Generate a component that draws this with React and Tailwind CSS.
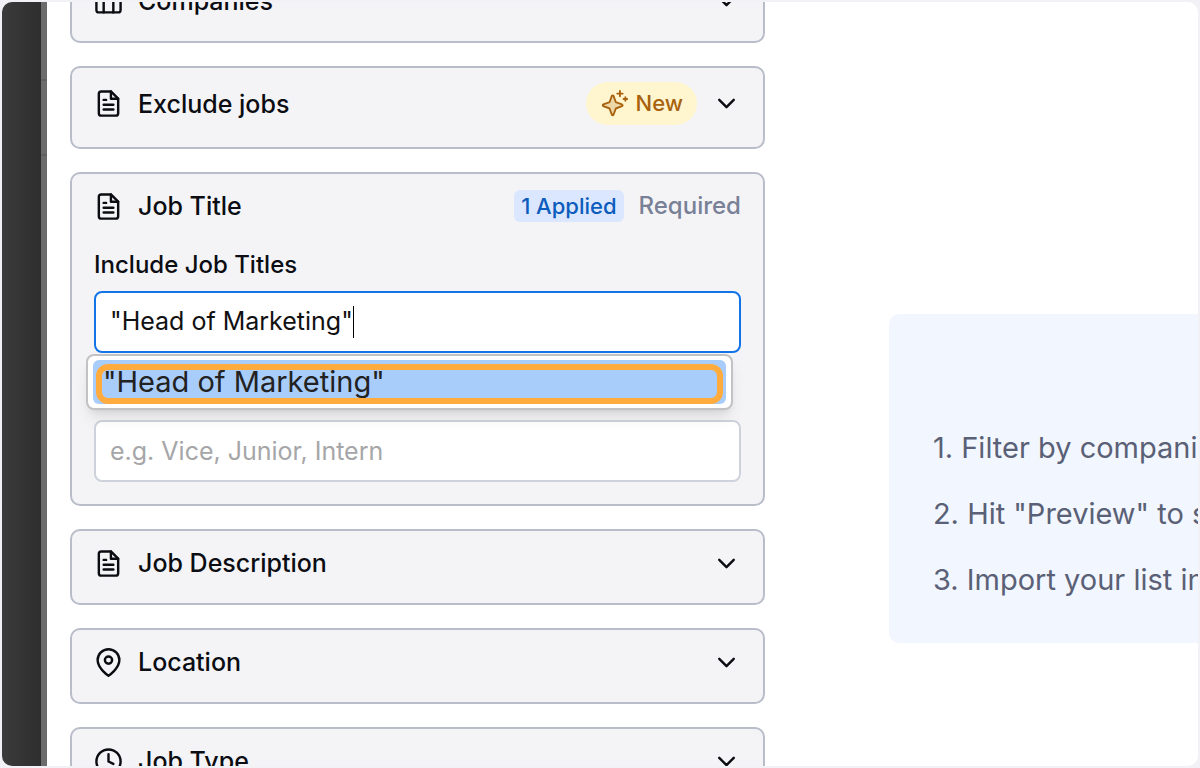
import { useState } from 'react'
import { FiBriefcase, FiChevronDown, FiClock, FiFileText, FiMapPin } from 'react-icons/fi'
import { PiSparkleDuotone } from 'react-icons/pi'

const steps = [
  '1. Filter by compani',
  '2. Hit "Preview" to s',
  '3. Import your list in',
]

function CardTitle({ icon: Icon, children }) {
  return (
    <span className="flex items-center gap-[15px]">
      <Icon className="size-[29px] shrink-0" />
      <span className="text-[25px] leading-9 font-medium">{children}</span>
    </span>
  )
}

function FilterCard({ icon, title, badge }) {
  return (
    <button
      type="button"
      aria-expanded="false"
      className="flex w-full items-center justify-between rounded-[10px] border-2 border-[#b9bdca] bg-[#f4f4f7] px-[22px] pt-3.5 pb-[22px] text-left"
    >
      <CardTitle icon={icon}>{title}</CardTitle>
      <span className="flex items-center gap-[15px]">
        {badge}
        <FiChevronDown className="size-[29px] shrink-0" />
      </span>
    </button>
  )
}

function NewBadge() {
  return (
    <span className="flex h-[43px] items-center gap-[7px] rounded-full bg-[#fff6cf] px-3.5 text-[22px] font-medium text-[#a8610c]">
      <PiSparkleDuotone className="size-[29px]" />
      New
    </span>
  )
}

function JobTitleCard() {
  const [include, setInclude] = useState('"Head of Marketing"')

  return (
    <section className="rounded-[10px] border-2 border-[#b9bdca] bg-[#f4f4f7] px-[22px] pt-3.5 pb-[22px]">
      <div className="flex items-center justify-between">
        <CardTitle icon={FiFileText}>Job Title</CardTitle>
        <div className="flex items-center gap-[15px] font-medium">
          <span className="rounded-md bg-[#dbe7fe] px-[7px] text-[22px] leading-8 text-[#0b5cbd]">1 Applied</span>
          <span className="text-2xl text-[#788196]">Required</span>
        </div>
      </div>

      <label htmlFor="include-titles" className="mt-[23px] mb-2 block text-2xl leading-9 font-medium">
        Include Job Titles
      </label>
      <div className="relative">
        <div className="flex h-[62px] items-center rounded-lg border-2 border-[#1374e8] bg-white px-3.5">
          <input
            id="include-titles"
            type="text"
            value={include}
            onChange={e => setInclude(e.target.value)}
            className="field-sizing-content text-[25px] text-[#111] caret-transparent outline-none"
          />
          <span className="h-8 w-px bg-black" />
        </div>

        {/* Suggestions */}
        <ul
          role="listbox"
          aria-label="Suggestions"
          className="absolute top-full right-2 -left-2 z-10 mt-px rounded-lg border-2 border-[#c2c2c4] bg-white px-[5px] py-1 shadow-lg"
        >
          <li
            role="option"
            aria-selected="true"
            className="relative h-11 rounded-md bg-[#a9cdfb] px-2.5 text-[29px] leading-11 text-[#222]"
          >
            {include}
            <span className="absolute inset-x-[3px] top-1 bottom-0 rounded-xl border-6 border-[#ffab3d]" />
          </li>
        </ul>
      </div>

      <input
        type="text"
        aria-label="Exclude Job Titles"
        placeholder="e.g. Vice, Junior, Intern"
        className="mt-[67px] block h-[62px] w-full rounded-lg border-2 border-[#ced2da] bg-white px-3.5 text-[25px] outline-none placeholder:text-[#a6a6a8]"
      />
    </section>
  )
}

function App() {
  return (
    <div className="h-screen bg-[#f1f1f6] p-0.5 font-['Inter',sans-serif] text-[#0b0d12]">
      <div className="flex h-full overflow-hidden rounded-[10px] bg-white">
        {/* Dimmed page behind the drawer */}
        <div className="w-[39px] shrink-0 bg-linear-to-r from-[#3b3b3b] to-[#2e2e2e]" />
        <div className="flex w-1.5 shrink-0 flex-col bg-[#6b6b6b]">
          <div className="h-[79px] border-b-2 border-[#5f5f5f]" />
          <div className="h-[75px] border-b-2 border-[#5f5f5f]" />
        </div>

        <main className="grid min-w-0 flex-1 grid-cols-[minmax(0,63fr)_minmax(0,38fr)]">
          <div className="-mt-[35px] flex flex-col gap-[23px] pl-[23px]">
            <FilterCard icon={FiBriefcase} title="Companies" />
            <FilterCard icon={FiFileText} title="Exclude jobs" badge={<NewBadge />} />
            <JobTitleCard />
            <FilterCard icon={FiFileText} title="Job Description" />
            <FilterCard icon={FiMapPin} title="Location" />
            <FilterCard icon={FiClock} title="Job Type" />
          </div>

          <aside className="mt-78 ml-31 self-start overflow-hidden rounded-l-[10px] bg-[#f1f6ff] pt-29 pb-[45px] pl-11">
            <div className="flex flex-col gap-[30px] text-[29px] leading-9 whitespace-nowrap text-[#5a6075]">
              {steps.map(step => (
                <p key={step}>{step}</p>
              ))}
            </div>
          </aside>
        </main>
      </div>
    </div>
  )
}

export default App
